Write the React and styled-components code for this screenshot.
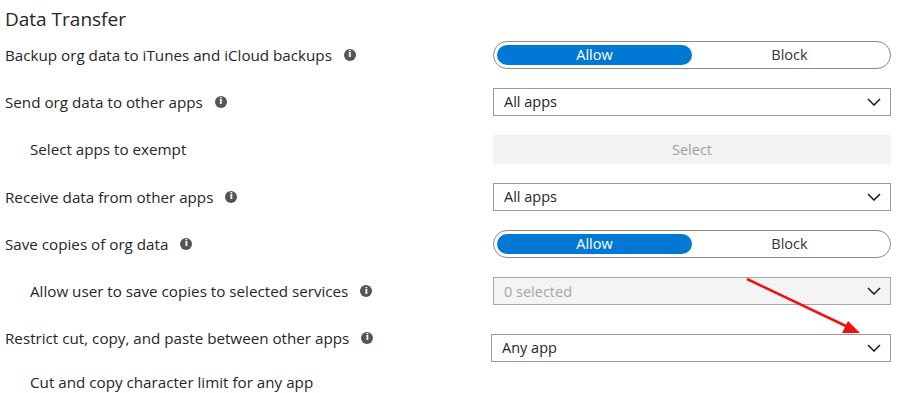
import React from 'react';
import styled, { createGlobalStyle } from 'styled-components';

const Global = createGlobalStyle`
  html, body {
    margin: 0;
    background: #ffffff;
  }
  body {
    font-family: "Open Sans", "Noto Sans", Arial, sans-serif;
    color: #262626;
  }
`;

const Page = styled.div`
  position: relative;
  width: 900px;
  height: 393px;
  overflow: hidden;
  padding: 0 8px 0 5px;
  box-sizing: border-box;
`;

const Title = styled.h2`
  margin: 0;
  height: 31px;
  line-height: 38px;
  font-size: 19px;
  font-weight: 400;
  color: #262626;
`;

const Row = styled.div`
  display: grid;
  grid-template-columns: 488px 398px;
  align-items: ${p => (p.$top ? 'start' : 'center')};
  height: ${p => (p.$last ? '40px' : '47.3px')};
`;

const Label = styled.div`
  display: flex;
  align-items: center;
  gap: 12px;
  padding-left: ${p => (p.$indent ? '25px' : '0')};
  font-size: 15.2px;
  line-height: 16px;
  color: #262626;
  white-space: nowrap;
  ${p => p.$top && 'margin-top: 15px;'}
`;

const Info = styled.span`
  display: inline-flex;
  align-items: center;
  justify-content: center;
  width: 12px;
  height: 12px;
  border-radius: 50%;
  background: #555;
  color: #fff;
  font-family: "DejaVu Sans", sans-serif;
  font-size: 9px;
  font-weight: 700;
  line-height: 1;
`;

const Toggle = styled.div`
  display: grid;
  grid-template-columns: 1fr 1fr;
  height: 28px;
  padding: 3px;
  box-sizing: border-box;
  border: 1px solid #8a8a8a;
  border-radius: 14px;
`;

const ToggleOption = styled.div`
  display: flex;
  align-items: center;
  justify-content: center;
  border-radius: 11px;
  font-size: 14.5px;
  background: ${p => (p.$active ? '#0078d4' : 'transparent')};
  color: ${p => (p.$active ? '#ffffff' : '#333333')};
`;

const Dropdown = styled.div`
  display: flex;
  align-items: center;
  justify-content: space-between;
  height: 28px;
  padding: 0 9px 0 10px;
  box-sizing: border-box;
  border: 1px solid ${p => (p.$disabled ? '#a8a8a8' : '#9a9a9a')};
  background: ${p => (p.$disabled ? '#f4f4f4' : '#ffffff')};
  color: ${p => (p.$disabled ? '#a6a6a6' : '#262626')};
  font-size: 14.5px;
  ${p => p.$top && 'margin-top: 19px; margin-left: -2px;'}
`;

const Button = styled.div`
  display: flex;
  align-items: center;
  justify-content: center;
  height: 29px;
  background: #f2f2f2;
  color: #a0a0a0;
  font-size: 14.5px;
`;

const Overlay = styled.svg`
  position: absolute;
  left: 0;
  top: 0;
  pointer-events: none;
`;

const Chevron = () => (
  <svg width="14" height="8" viewBox="0 0 14 8">
    <path d="M1 1 L7 7 L13 1" fill="none" stroke="#222" strokeWidth="1.6" />
  </svg>
);

const AllowBlock = () => (
  <Toggle>
    <ToggleOption $active>Allow</ToggleOption>
    <ToggleOption>Block</ToggleOption>
  </Toggle>
);

const Select = ({ value, disabled, top }) => (
  <Dropdown $disabled={disabled} $top={top}>
    <span>{value}</span>
    <Chevron />
  </Dropdown>
);

export default function App() {
  return (
    <>
      <Global />
      <Page>
        <Title>Data Transfer</Title>
        <Row>
          <Label>Backup org data to iTunes and iCloud backups <Info>i</Info></Label>
          <AllowBlock />
        </Row>
        <Row>
          <Label>Send org data to other apps <Info>i</Info></Label>
          <Select value="All apps" />
        </Row>
        <Row>
          <Label $indent>Select apps to exempt</Label>
          <Button>Select</Button>
        </Row>
        <Row>
          <Label>Receive data from other apps <Info>i</Info></Label>
          <Select value="All apps" />
        </Row>
        <Row>
          <Label>Save copies of org data <Info>i</Info></Label>
          <AllowBlock />
        </Row>
        <Row>
          <Label $indent>Allow user to save copies to selected services <Info>i</Info></Label>
          <Select value="0 selected" disabled />
        </Row>
        <Row $top>
          <Label $top>Restrict cut, copy, and paste between other apps <Info>i</Info></Label>
          <Select value="Any app" top />
        </Row>
        <Row $last>
          <Label $indent>Cut and copy character limit for any app</Label>
        </Row>
        <Overlay width="900" height="393">
          <line x1="747" y1="279" x2="848" y2="327" stroke="#ee1111" strokeWidth="2.5" />
          <polygon points="860,333 842,333 848,321" fill="#ee1111" />
        </Overlay>
      </Page>
    </>
  );
}
